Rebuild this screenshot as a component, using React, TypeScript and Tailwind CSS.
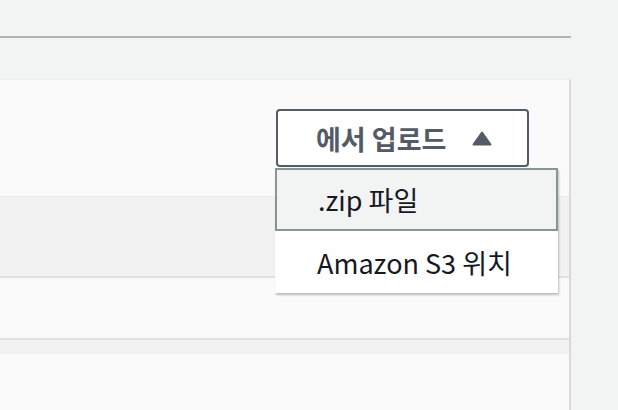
import React from "react";

export default function App() {
  const font = { fontFamily: '"Noto Sans CJK KR", "Noto Sans", sans-serif' };
  return (
    <div className="w-[618px] h-[410px] bg-[#f2f3f3] overflow-hidden relative" style={font}>
      <div className="h-[38px] w-[571px] border-b-2 border-[#aab7b8]" />
      <div className="mt-[41px] w-[571px] h-[331px] bg-[#fafafa] border-t border-[#eaeded] border-r-2 border-r-[#d5dbdb] relative flex flex-col">
        <div className="h-[116px] shrink-0" />
        <div className="h-[82px] shrink-0 bg-[#f2f2f2] border-t border-[#e6eaea] border-b-2 border-b-[#e1e1e1]" />
        <div className="h-[62px] shrink-0 border-b-2 border-[#e1e1e1]" />
        <div className="h-[14px] shrink-0 bg-[#f2f2f2]" />
        <div className="flex-1" />

        <div className="absolute left-[276px] top-[29px] flex flex-col items-start">
          <button className="w-[253px] h-[58px] bg-white border-2 border-[#545b64] rounded-[4px] flex items-center pl-[38px] text-[#545b64] font-bold text-[27px] leading-none">
            <span>에서 업로드</span>
            <svg width="20" height="15" viewBox="0 0 20 15" className="ml-[26px]">
              <path d="M10 1.5 L18.5 13.5 L1.5 13.5 Z" fill="#545b64" stroke="#545b64" strokeWidth="2" strokeLinejoin="round" />
            </svg>
          </button>
          <div className="mt-[1px] -ml-[1px] w-[283px] bg-white shadow-[1px_2px_2px_rgba(0,0,0,0.25)] text-[#16191f] text-[27px] leading-none">
            <div className="h-[63px] bg-[#f2f3f3] border-2 border-[#879596] flex items-center pl-[41px]">
              .zip 파일
            </div>
            <div className="h-[62px] flex items-center pl-[42px]">Amazon S3 위치</div>
          </div>
        </div>
      </div>
    </div>
  );
}
